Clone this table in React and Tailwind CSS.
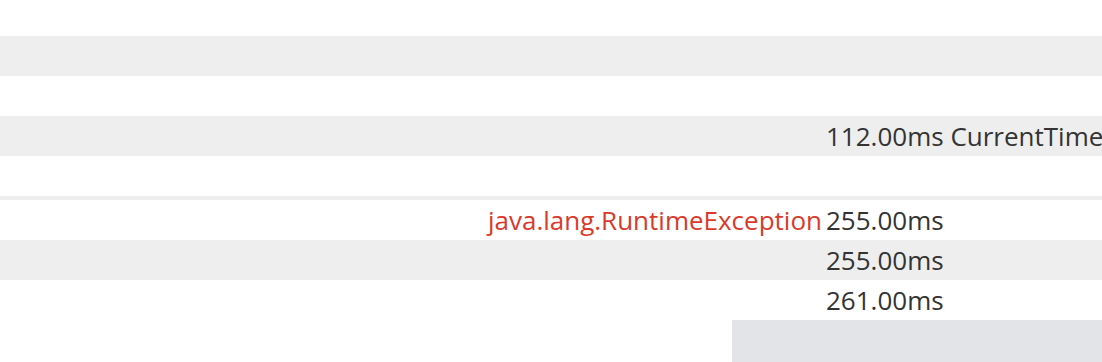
export default function App() {
  const rows = [
    { bg: false, err: "", dur: "", name: "" , h: "h-[36px]"},
    { bg: true, err: "", dur: "", name: "" },
    { bg: false, err: "", dur: "", name: "" },
    { bg: true, err: "", dur: "112.00ms", name: "CurrentTime" },
    { bg: false, err: "", dur: "", name: "", h: "h-[40px]" },
  ];
  const rows2 = [
    { bg: false, err: "java.lang.RuntimeException", dur: "255.00ms", name: "" },
    { bg: true, err: "", dur: "255.00ms", name: "" },
    { bg: false, err: "", dur: "261.00ms", name: "" },
  ];
  const Row = ({ r }) => (
    <div
      className={`flex items-center ${r.h || "h-[40px]"} ${r.bg ? "bg-[#eeeeee]" : "bg-white"} whitespace-nowrap overflow-hidden`}
    >
      <div className="w-[822px] shrink-0 text-right text-[#d93a2b]">{r.err}</div>
      <div className="pl-[4px] text-[#333333]">
        {r.dur}
        {r.name ? " " + r.name : ""}
      </div>
    </div>
  );
  return (
    <div
      className="w-[1102px] h-[362px] overflow-hidden bg-white text-[26px] leading-none"
      style={{ fontFamily: '"Open Sans", sans-serif' }}
    >
      {rows.map((r, i) => (
        <Row key={i} r={r} />
      ))}
      <div className="h-[4px] bg-[#eeeeee]" />
      {rows2.map((r, i) => (
        <Row key={i} r={r} />
      ))}
      <div className="flex">
        <div className="w-[732px] shrink-0" />
        <div className="flex-1 h-[42px] bg-[#e2e4e8]" />
      </div>
    </div>
  );
}
